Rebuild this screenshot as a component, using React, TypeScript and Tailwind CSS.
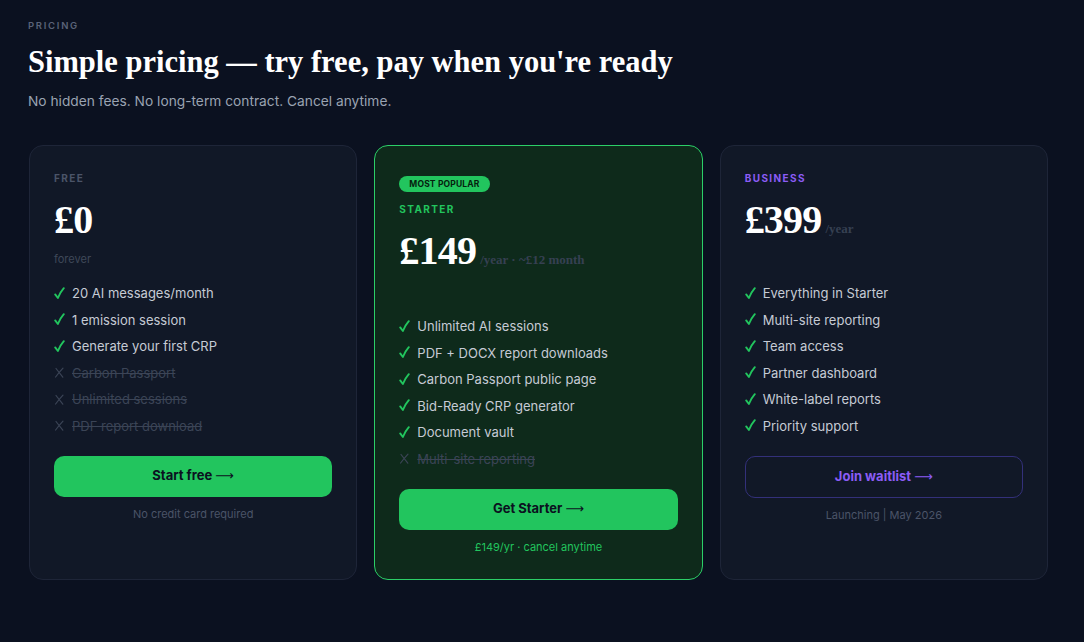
import React from "react";

type Feature = { text: string; on: boolean };

interface Plan {
  name: string;
  nameColor: string;
  price: string;
  unit?: string;
  sub?: string;
  badge?: boolean;
  features: Feature[];
  cta: string;
  note: string;
  variant: "free" | "starter" | "business";
}

const plans: Plan[] = [
  {
    name: "FREE",
    nameColor: "text-[#4b5468]",
    price: "£0",
    sub: "forever",
    features: [
      { text: "20 AI messages/month", on: true },
      { text: "1 emission session", on: true },
      { text: "Generate your first CRP", on: true },
      { text: "Carbon Passport", on: false },
      { text: "Unlimited sessions", on: false },
      { text: "PDF report download", on: false },
    ],
    cta: "Start free",
    note: "No credit card required",
    variant: "free",
  },
  {
    name: "STARTER",
    nameColor: "text-[#22c55e]",
    price: "£149",
    unit: "/year · ~£12 month",
    badge: true,
    features: [
      { text: "Unlimited AI sessions", on: true },
      { text: "PDF + DOCX report downloads", on: true },
      { text: "Carbon Passport public page", on: true },
      { text: "Bid-Ready CRP generator", on: true },
      { text: "Document vault", on: true },
      { text: "Multi-site reporting", on: false },
    ],
    cta: "Get Starter",
    note: "£149/yr · cancel anytime",
    variant: "starter",
  },
  {
    name: "BUSINESS",
    nameColor: "text-[#8b5cf6]",
    price: "£399",
    unit: "/year",
    features: [
      { text: "Everything in Starter", on: true },
      { text: "Multi-site reporting", on: true },
      { text: "Team access", on: true },
      { text: "Partner dashboard", on: true },
      { text: "White-label reports", on: true },
      { text: "Priority support", on: true },
    ],
    cta: "Join waitlist",
    note: "Launching | May 2026",
    variant: "business",
  },
];

const serif = "font-['Liberation_Serif',serif]";

const CheckMark = () => (
  <svg width="11" height="13" viewBox="0 0 11 13" className="shrink-0">
    <path
      d="M1.2 7.4 L3.9 11 Q6 5.5 9.8 1.2"
      fill="none"
      stroke="#22c55e"
      strokeWidth="1.9"
      strokeLinecap="round"
      strokeLinejoin="round"
    />
  </svg>
);

const CrossMark = () => (
  <svg width="11" height="13" viewBox="0 0 11 13" className="shrink-0">
    <path
      d="M2 2.5 Q5.5 7 8.8 11.2 M9 2.2 Q5 6.5 1.6 11"
      fill="none"
      stroke="#3b4456"
      strokeWidth="1.2"
      strokeLinecap="round"
    />
  </svg>
);

const PlanCard: React.FC<{ plan: Plan }> = ({ plan }) => {
  const cardStyle =
    plan.variant === "starter"
      ? "bg-[#0e2a1b] border-[#2ccf68]"
      : "bg-[#111827] border-[#1e2538]";

  const buttonStyle =
    plan.variant === "business"
      ? "border border-[#33307a] text-[#8b5cf6] h-[42px]"
      : "bg-[#22c55e] text-[#0b1120] h-[41px]";

  const noteColor =
    plan.variant === "starter" ? "text-[#22c55e]" : "text-[#4b5468]";

  return (
    <div
      className={`flex flex-col rounded-[14px] border px-6 pt-[25px] pb-6 ${cardStyle}`}
    >
      {plan.badge && (
        <div className="mt-[5px] mb-[10px] flex">
          <span className="rounded-full bg-[#22c55e] px-[10px] h-4 leading-4 text-[8.5px] font-bold tracking-[0.02em] text-[#06210f]">
            MOST POPULAR
          </span>
        </div>
      )}
      <p
        className={`text-[10px] leading-[14px] font-bold tracking-[0.14em] ${plan.nameColor}`}
      >
        {plan.name}
      </p>
      <div className="mt-[15px] flex items-baseline gap-1 h-10">
        <span
          className={`${serif} text-[40px] leading-10 font-bold text-white tracking-[-0.02em]`}
        >
          {plan.price}
        </span>
        {plan.unit && (
          <span className={`${serif} text-[13px] font-bold text-[#364052]`}>
            {plan.unit}
          </span>
        )}
      </div>
      {plan.variant === "starter" ? (
        <div className="h-[45px]" />
      ) : (
        <p className="mt-[11px] mb-4 text-[11px] leading-4 text-[#3f4859] h-4">
          {plan.sub}
        </p>
      )}
      <ul className="flex flex-col gap-[6.5px]">
        {plan.features.map((f) => (
          <li
            key={f.text}
            className={`flex items-center gap-[7px] text-[13px] leading-5 ${
              f.on ? "text-[#c6cbd5]" : "text-[#3b4456]"
            }`}
          >
            {f.on ? <CheckMark /> : <CrossMark />}
            <span className={f.on ? "" : "line-through"}>{f.text}</span>
          </li>
        ))}
      </ul>
      <button
        className={`mt-5 w-full rounded-[10px] text-[13px] font-bold ${buttonStyle}`}
      >
        {plan.cta}{" "}
        <span className="font-['DejaVu_Sans',sans-serif] font-normal">⟶</span>
      </button>
      <p
        className={`mt-[9px] text-center text-[11px] leading-4 ${noteColor}`}
      >
        {plan.note}
      </p>
    </div>
  );
};

export default function App() {
  return (
    <div className="min-h-[642px] bg-[#0b1120] px-7 pt-[19px] font-['Inter',sans-serif]">
      <p className="text-[9.5px] leading-[14px] font-semibold tracking-[0.18em] text-[#5a6378]">
        PRICING
      </p>
      <h1
        className={`${serif} mt-[11px] text-[30.5px] leading-9 font-bold text-white`}
      >
        Simple pricing — try free, pay when you're ready
      </h1>
      <p className="mt-[11px] text-[13.75px] leading-5 text-[#9aa3b2]">
        No hidden fees. No long-term contract. Cancel anytime.
      </p>
      <div className="mt-[34px] ml-px grid w-[1019px] grid-cols-3 gap-[17px]">
        {plans.map((p) => (
          <PlanCard key={p.name} plan={p} />
        ))}
      </div>
    </div>
  );
}
